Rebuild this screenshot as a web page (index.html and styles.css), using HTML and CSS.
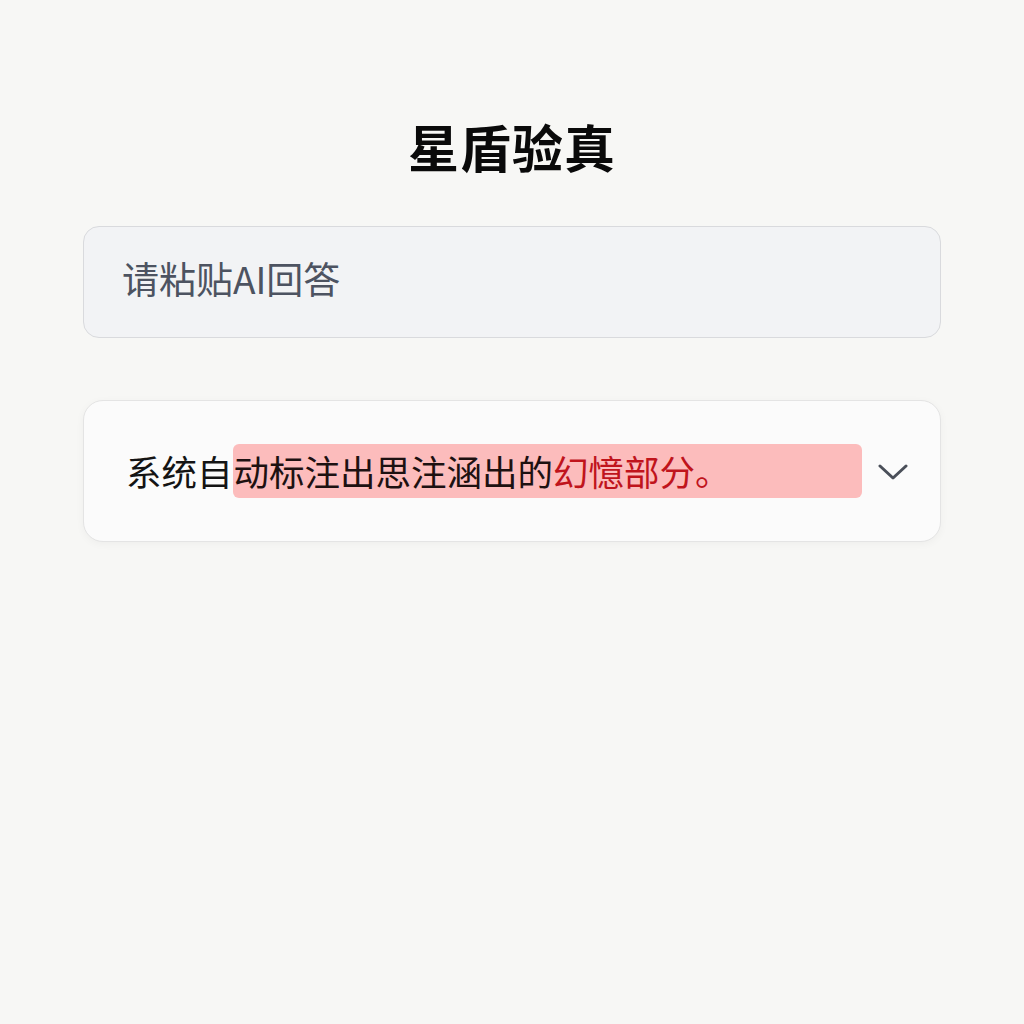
FILE: index.html
```html
<!DOCTYPE html>
<html lang="zh-CN">
<head>
<meta charset="utf-8">
<title>星盾验真</title>
<link rel="stylesheet" href="styles.css">
</head>
<body>
<main class="page">
  <h1 class="title">星盾验真</h1>
  <div class="answer-input">
    <span class="placeholder">请粘贴AI回答</span>
  </div>
  <div class="result">
    <div class="result-text">
      <span class="plain">系统自</span>
      <span class="mark"><span class="dark">动标注出思注涵出的</span><span class="red">幻憶部分。</span></span>
    </div>
    <svg class="chevron" width="30" height="18" viewBox="0 0 30 18" aria-hidden="true">
      <path d="M2 3 L15 15 L28 3" fill="none" stroke="#4a4f59" stroke-width="3" stroke-linecap="round" stroke-linejoin="round"/>
    </svg>
  </div>
</main>
</body>
</html>
```
FILE: styles.css
```css
* { box-sizing: border-box; }

html, body {
  margin: 0;
  height: 100%;
}

body {
  background: #f7f7f5;
  font-family: "Noto Sans CJK SC", "Noto Sans", sans-serif;
  color: #111;
}

.page {
  padding: 108px 83px 0 83px;
  display: flex;
  flex-direction: column;
}

.title {
  margin: 0;
  text-align: center;
  font-size: 51px;
  font-weight: 700;
  line-height: 76px;
  color: #0a0a0a;
  letter-spacing: 1px;
}

.answer-input {
  margin-top: 42px;
  height: 112px;
  border: 1px solid #d9dadd;
  border-radius: 16px;
  background: #f2f3f5;
  display: flex;
  align-items: center;
  padding-left: 38px;
  padding-bottom: 8px;
}

.placeholder {
  font-size: 37px;
  color: #4d5361;
  line-height: 1;
}

.result {
  margin-top: 62px;
  height: 142px;
  border: 1px solid #e4e4e4;
  border-radius: 20px;
  background: #fbfbfb;
  box-shadow: 0 2px 8px rgba(0, 0, 0, 0.04);
  display: flex;
  align-items: center;
  padding: 0 32px 0 42px;
  gap: 16px;
}

.result-text {
  flex: 1;
  display: flex;
  align-items: center;
  font-size: 35.5px;
  line-height: 1;
}

.plain {
  color: #141414;
}

.mark {
  flex: 1;
  height: 54px;
  display: flex;
  align-items: center;
  background: #fcbcbc;
  border-radius: 6px;
  padding-left: 1px;
}

.dark {
  color: #1d1111;
}

.red {
  color: #c0141c;
}

.chevron {
  flex: none;
  margin-top: 2px;
}
```
